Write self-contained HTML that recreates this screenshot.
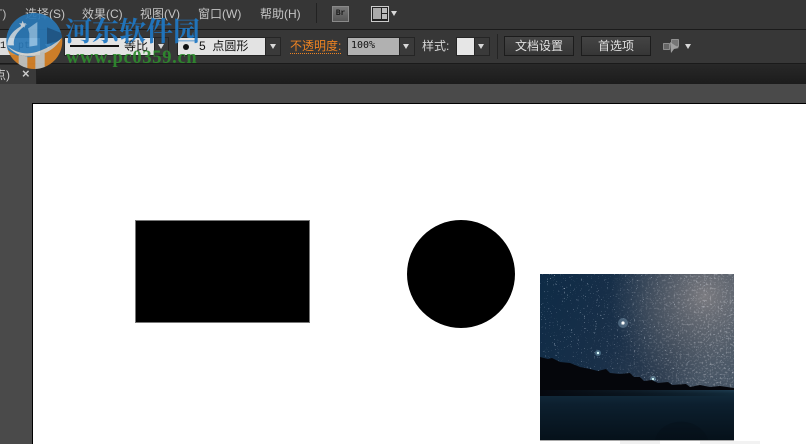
<!DOCTYPE html>
<html><head><meta charset="utf-8">
<style>
html,body{margin:0;padding:0;background:#484848}
#r{position:relative;width:806px;height:444px;overflow:hidden;background:#4a4a4a;font-family:"Liberation Sans","Noto Sans CJK SC",sans-serif;font-size:12px;color:#c4c4c4}
#r div,#r span.a{position:absolute;white-space:nowrap}
.t{line-height:16px}
.field{background:#e3e3e3;color:#111;box-sizing:border-box}
.dd{background:#3a3a3a;box-sizing:border-box}
.tri{width:0;height:0;border-left:3.5px solid transparent;border-right:3.5px solid transparent;border-top:5px solid #d8d8d8}
.btn{background:linear-gradient(#444,#363636);border:1px solid #1c1c1c;box-sizing:border-box;text-align:center;color:#e0e0e0;font-size:12px;line-height:18px}
.wrap{background:#252525}
</style></head><body>
<div id="r">
<div style="left:0;top:0;width:806px;height:29px;background:#363636"></div>
<div style="left:0;top:29px;width:806px;height:1px;background:#1b1b1b"></div>
<div style="left:0;top:30px;width:806px;height:33px;background:#373737"></div>
<div style="left:0;top:63px;width:806px;height:1px;background:#1a1a1a"></div>
<div style="left:0;top:64px;width:806px;height:20px;background:linear-gradient(#282828,#1c1c1c)"></div>
<div style="left:0;top:65px;width:36px;height:19px;background:#3a3a3a"></div>
<div style="left:36px;top:65px;width:1px;height:19px;background:#222"></div>
<div class="t" style="left:-6px;top:67px;font-size:12px;color:#ccc">点)</div>
<div class="t" style="left:22px;top:66px;font-size:13px;font-weight:bold;color:#ccc">×</div>

<div class="t" style="left:-5px;top:6px;color:#bbb">T)</div>
<div class="t" style="left:25px;top:6px">选择(S)</div>
<div class="t" style="left:82px;top:6px">效果(C)</div>
<div class="t" style="left:140px;top:6px">视图(V)</div>
<div class="t" style="left:198px;top:6px">窗口(W)</div>
<div class="t" style="left:260px;top:6px">帮助(H)</div>
<div style="left:316px;top:3px;width:1px;height:20px;background:#222"></div>

<div style="left:332px;top:6px;width:15px;height:14px;background:linear-gradient(#777,#555);border:1px solid #8a8a8a;font:bold 8px/14px 'Liberation Mono',monospace;text-align:center;color:#1c1c1c">Br</div>
<div style="left:371px;top:6px;width:16px;height:14px;background:#222;border:1px solid #ccc"></div>
<div style="left:373px;top:8px;width:8px;height:11px;background:#aaa"></div>
<div style="left:382px;top:8px;width:5px;height:5px;background:#bbb"></div>
<div style="left:382px;top:14px;width:5px;height:5px;background:#bbb"></div>
<div class="tri" style="left:391px;top:11px"></div>

<div class="field" style="left:0;top:38px;width:40px;height:17px;background:#ddd;font:10px/17px 'Liberation Mono',monospace">1&nbsp;&nbsp;pt</div>
<div class="tri" style="left:45px;top:44px"></div>

<div class="wrap" style="left:64px;top:37px;width:105px;height:19px"></div>
<div class="field" style="left:65px;top:38px;width:89px;height:17px"></div>
<div style="left:70px;top:45px;width:49px;height:2px;background:#111"></div>
<div class="t" style="left:124px;top:38px;color:#111">等比</div>
<div class="dd" style="left:155px;top:38px;width:13px;height:17px"></div>
<div class="tri" style="left:158px;top:44px"></div>

<div class="wrap" style="left:177px;top:37px;width:104px;height:19px"></div>
<div class="field" style="left:178px;top:38px;width:87px;height:17px"></div>
<div style="left:183px;top:44px;width:6px;height:6px;border-radius:50%;background:#111"></div>
<div class="t" style="left:199px;top:38px;color:#111">5&nbsp;&nbsp;点圆形</div>
<div class="dd" style="left:266px;top:38px;width:14px;height:17px"></div>
<div class="tri" style="left:270px;top:44px"></div>

<div class="t" style="left:290px;top:39px;color:#ee8322;border-bottom:1px dotted #ee8322;line-height:14px;padding-bottom:0">不透明度:</div>

<div class="wrap" style="left:347px;top:37px;width:68px;height:19px"></div>
<div style="left:348px;top:38px;width:51px;height:17px;background:#b1b1b1;color:#111;font:10px/16px 'DejaVu Sans Mono','Liberation Mono',monospace;padding-left:3px;box-sizing:border-box">100%</div>
<div class="dd" style="left:400px;top:38px;width:14px;height:17px"></div>
<div class="tri" style="left:403px;top:44px"></div>

<div class="t" style="left:422px;top:38px;color:#d4d4d4">样式:</div>
<div class="wrap" style="left:456px;top:37px;width:34px;height:19px"></div>
<div style="left:457px;top:38px;width:17px;height:17px;background:#e6e6e6"></div>
<div class="dd" style="left:475px;top:38px;width:14px;height:17px"></div>
<div class="tri" style="left:478px;top:44px"></div>
<div style="left:497px;top:34px;width:1px;height:25px;background:#242424"></div>

<div class="btn" style="left:504px;top:36px;width:70px;height:20px">文档设置</div>
<div class="btn" style="left:581px;top:36px;width:70px;height:20px">首选项</div>

<svg style="position:absolute;left:660px;top:37px" width="24" height="18" viewBox="0 0 24 18">
<rect x="3.5" y="6.5" width="6" height="6" fill="#666" stroke="#ccc" stroke-dasharray="1 1"/>
<rect x="11.5" y="2.5" width="7" height="7" fill="#777" stroke="#ccc" stroke-dasharray="1 1"/>
<path d="M10 5 L19 11 L14 12 L11 16 Z" fill="#a0a0a0"/>
</svg>
<div class="tri" style="left:685px;top:44px"></div>

<div style="left:32px;top:103px;width:800px;height:360px;background:#fff;border:1px solid #000"></div>

<div style="left:135px;top:220px;width:175px;height:103px;background:#000;box-sizing:border-box;border:1px solid #777"></div>
<div style="left:407px;top:220px;width:108px;height:108px;border-radius:50%;background:#000"></div>

<svg style="position:absolute;left:540px;top:274px" width="194" height="168" viewBox="0 0 194 168">
<defs>
<linearGradient id="s" x1="0" y1="0" x2="1" y2="0.25"><stop offset="0" stop-color="#0e2b46"/><stop offset=".5" stop-color="#1a3049"/><stop offset=".8" stop-color="#2e3d50"/><stop offset="1" stop-color="#465464"/></linearGradient>
<radialGradient id="g" cx="165" cy="22" r="95" gradientUnits="userSpaceOnUse"><stop offset="0" stop-color="#7f7e82" stop-opacity=".95"/><stop offset=".55" stop-color="#60666f" stop-opacity=".55"/><stop offset="1" stop-color="#55606c" stop-opacity="0"/></radialGradient>
<linearGradient id="w" x1="0" y1="0" x2="0" y2="1"><stop offset="0" stop-color="#1d3c50"/><stop offset=".07" stop-color="#122a3a"/><stop offset=".3" stop-color="#0c1f2e"/><stop offset="1" stop-color="#06111a"/></linearGradient>
<linearGradient id="wd" x1="0" y1="0" x2="1" y2="0"><stop offset="0" stop-color="#05080e"/><stop offset=".5" stop-color="#05080e" stop-opacity=".6"/><stop offset="1" stop-color="#05080e" stop-opacity="0"/></linearGradient>
<linearGradient id="mg" x1="0" y1="0" x2="1" y2="0"><stop offset=".3" stop-color="#000"/><stop offset=".85" stop-color="#fff"/></linearGradient>
<mask id="m"><rect width="194" height="118" fill="url(#mg)"/></mask>
<filter id="n" x="0" y="0" width="100%" height="100%"><feTurbulence type="fractalNoise" baseFrequency=".7" numOctaves="2" seed="7"/><feColorMatrix values="0 0 0 0 .8 0 0 0 0 .88 0 0 0 0 1 6 6 0 0 -7.7"/></filter>
<filter id="n2" x="0" y="0" width="100%" height="100%"><feTurbulence type="fractalNoise" baseFrequency=".5" numOctaves="2" seed="3"/><feColorMatrix values="0 0 0 0 .8 0 0 0 0 .8 0 0 0 0 .85 4 4 0 0 -4.3"/></filter>
</defs>
<rect width="194" height="118" fill="url(#s)"/>
<rect width="194" height="118" fill="url(#g)"/>
<rect width="194" height="118" filter="url(#n)" opacity=".6"/>
<g mask="url(#m)"><rect width="194" height="118" filter="url(#n2)" opacity=".3"/></g>
<circle cx="83" cy="49" r="5" fill="#9fc0d8" opacity=".35"/><circle cx="83" cy="49" r="1.6" fill="#fff"/>
<circle cx="58" cy="79" r="3" fill="#8fc0d8" opacity=".4"/><circle cx="58" cy="79" r="1.2" fill="#dff"/>
<circle cx="113" cy="105" r="3" fill="#8fc0d8" opacity=".4"/><circle cx="113" cy="105" r="1.1" fill="#dff"/>
<path d="M0 83 L8 85 L12 84 L20 88 L30 89 L40 93 L50 95 L58 97 L66 95 L70 99 L80 100 L90 99 L94 103 L100 103 L104 107 L112 106 L118 109 L128 108 L132 111 L146 110 L150 113 L160 111 L170 113 L180 112 L194 114 L194 118 L0 118 Z" fill="#05060b"/>
<rect y="116" width="194" height="50" fill="url(#w)"/>
<rect y="116" width="194" height="6" fill="url(#wd)"/>
<path d="M115 166 C118 152 134 146 146 148 C158 150 166 158 168 166Z" fill="#050e16" opacity=".35"/>
<rect x="0" y="166" width="194" height="1" fill="#aaa"/>
</svg>
<div style="left:620px;top:441px;width:40px;height:3px;background:#f0f0f0"></div>
<div style="left:700px;top:441px;width:60px;height:3px;background:#f2f2f2"></div>

<svg style="position:absolute;left:2px;top:8px" width="64" height="62" viewBox="0 0 192 186">
<defs><clipPath id="c"><circle cx="97" cy="99" r="84"/></clipPath></defs>
<g clip-path="url(#c)" opacity=".92">
<rect width="192" height="186" fill="#2a78b6"/>
<path d="M135 58 L181 76 L181 96 L135 108 Z" fill="#1f5a8c"/>
<path d="M8 118 Q60 165 115 138 Q150 122 185 84 L185 186 L8 186Z" fill="#d98428"/>
<path d="M14 112 Q60 150 115 128 Q150 115 178 92 Q155 130 110 142 Q50 155 14 112Z" fill="#d0d0cc"/>
<path d="M50 140 L76 146 L76 186 L50 186Z" fill="#c8c8c4"/>
<path d="M100 138 L128 130 L128 186 L100 186Z" fill="#c8c8c4"/>
<path d="M16 112 C16 84 42 56 76 48 C50 66 32 86 36 112 Z" fill="#c6d6e2"/>
<path d="M78 62 L106 42 L106 112 L82 116 L82 76Z" fill="#86b8de"/>
<path d="M62 38 L65 46 L73 46 L67 51 L69 59 L62 54 L55 59 L57 51 L51 46 L59 46Z" fill="#cfd8e0"/>
</g>
</svg>
<div class="t" style="left:65px;top:14px;font:700 27px/32px 'Noto Serif CJK SC',serif;color:#1f78c4;opacity:.93">河东软件园</div>
<div class="t" style="left:66px;top:49px;font:bold 18.5px/18px 'Liberation Serif',serif;letter-spacing:.7px;color:#2e8b2e;opacity:.92">www.pc0359.cn</div>
</div>
</body></html>
